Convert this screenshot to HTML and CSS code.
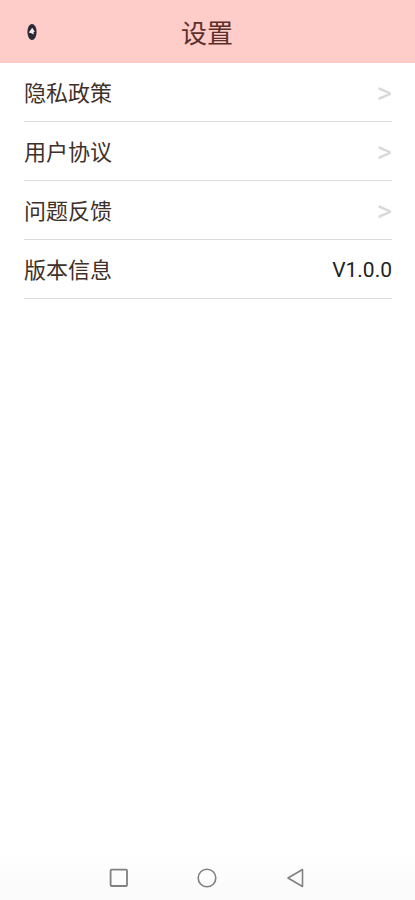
FILE: index.html
```html
<!DOCTYPE html>
<html>
<head>
  <meta http-equiv="Content-Type" content="text/html; charset=UTF-8"/>
  <title>设置</title>
  <link rel="stylesheet" href="styles.css">
</head>

<body>
  <div class="page">
    <div class="header">
      <svg class="backIcon" width="10" height="18" viewBox="0 0 10 18">
        <ellipse cx="5" cy="9" rx="4.6" ry="8" fill="#2b2838"/>
        <path d="M1.8 9.4 L5.2 4.8 L8 9 L6.6 8.8 L6.6 11.6 L4.4 10.2 Z" fill="#f4efef"/>
      </svg>
      <div class="title">设置</div>
    </div>

    <div class="list">
      <div class="row"><span>隐私政策</span><span class="arrow">&gt;</span></div>
      <div class="row"><span>用户协议</span><span class="arrow">&gt;</span></div>
      <div class="row"><span>问题反馈</span><span class="arrow">&gt;</span></div>
      <div class="row"><span>版本信息</span><span class="version">V1.0.0</span></div>
    </div>

    <div class="navBar">
      <svg width="20" height="20" viewBox="0 0 20 20">
        <rect x="1.6" y="1.6" width="16.4" height="16.4" rx="1" fill="none" stroke="#808080" stroke-width="1.8"/>
      </svg>
      <svg width="20" height="20" viewBox="0 0 20 20">
        <circle cx="10" cy="10" r="8.8" fill="none" stroke="#808080" stroke-width="1.6"/>
      </svg>
      <svg width="20" height="20" viewBox="0 0 20 20">
        <path d="M17.5 1.5 L17.5 18.5 L3 10 Z" fill="none" stroke="#808080" stroke-width="1.6" stroke-linejoin="round"/>
      </svg>
    </div>
  </div>
</body>
</html>
```

FILE: styles.css
```css
html, body {
  margin: 0;
  padding: 0;
}
body {
  font-family: "Liberation Sans", "Noto Sans CJK SC", sans-serif;
  background: #fff;
}
.page {
  width: 415px;
  height: 900px;
  display: flex;
  flex-direction: column;
}

.header {
  height: 63px;
  background: #ffcdc9;
  display: flex;
  align-items: center;
  justify-content: center;
  position: relative;
  flex-shrink: 0;
}
.backIcon {
  position: absolute;
  left: 27px;
  top: 23px;
}
.title {
  font-size: 26px;
  color: #5c2f2a;
  margin-bottom: 1px;
  margin-right: 1px;
}

.list {
  flex: 1;
  padding-left: 24px;
  padding-right: 23px;
}
.row {
  height: 56px;
  padding-bottom: 2px;
  border-bottom: 1px solid #dcdcdc;
  display: flex;
  align-items: center;
  justify-content: space-between;
  font-size: 22px;
  color: #40302a;
}
.arrow {
  font-family: Roboto, sans-serif;
  color: #d8d8d8;
  font-size: 29px;
  line-height: 30px;
  padding-top: 4px;
}
.version {
  font-family: Roboto, sans-serif;
  color: #222;
  font-size: 21px;
  padding-top: 4px;
}

.navBar {
  height: 45px;
  padding-top: 3px;
  background: linear-gradient(#ffffff, #fafafa);
  display: flex;
  align-items: center;
  padding-left: 109px;
  padding-right: 110px;
  justify-content: space-between;
  flex-shrink: 0;
}
```
